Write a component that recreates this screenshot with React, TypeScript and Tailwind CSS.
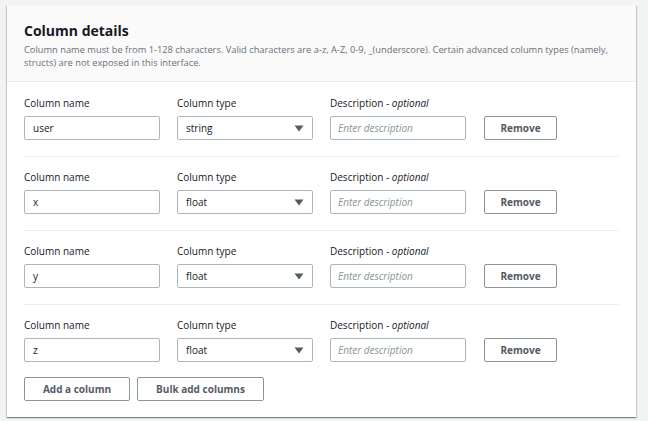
import React from 'react'

const font = { fontFamily: '"Open Sans", "Noto Sans", Arial, sans-serif' }

const rows = [
  { name: 'user', type: 'string' },
  { name: 'x', type: 'float' },
  { name: 'y', type: 'float' },
  { name: 'z', type: 'float' },
]

function Label({ children }: { children: React.ReactNode }) {
  return <div className="text-[10px] leading-[14px] text-[#16191f] mb-[6px]">{children}</div>
}

function Row({ name, type, last }: { name: string; type: string; last: boolean }) {
  return (
    <div className={last ? 'pt-[13px]' : 'pt-[13px] pb-[16px] border-b border-[#eaeded]'}>
      <div className="flex items-end">
        <div className="w-[136px]">
          <Label>Column name</Label>
          <div className="h-[24px] border border-[#aab7b8] rounded-[2px] px-[8px] flex items-center text-[10px] text-[#16191f]">
            {name}
          </div>
        </div>
        <div className="w-[136px] ml-[17px]">
          <Label>Column type</Label>
          <div className="h-[24px] border border-[#aab7b8] rounded-[2px] pl-[8px] pr-[8px] flex items-center justify-between text-[10px] text-[#16191f]">
            <span>{type}</span>
            <svg width="10" height="7" viewBox="0 0 10 7">
              <path d="M0.5 0.5 L9.5 0.5 L5 6.5 Z" fill="#545b64" />
            </svg>
          </div>
        </div>
        <div className="w-[136px] ml-[17px]">
          <Label>
            Description - <i>optional</i>
          </Label>
          <div className="h-[24px] border border-[#aab7b8] rounded-[2px] px-[7px] flex items-center text-[10px] italic text-[#879596]">
            Enter description
          </div>
        </div>
        <button className="ml-[18px] w-[73px] h-[24px] border border-[#879596] rounded-[2px] text-[10px] font-bold text-[#545b64] bg-white">
          Remove
        </button>
      </div>
    </div>
  )
}

export default function App() {
  return (
    <div className="w-[648px] h-[421px] bg-[#f2f3f3] pt-[5px] pl-[7px]" style={font}>
      <div className="w-[629px] bg-white shadow-[0_1px_1px_0_rgba(0,28,36,0.3),1px_1px_1px_0_rgba(0,28,36,0.15),-1px_1px_1px_0_rgba(0,28,36,0.15)]">
        {/* header */}
        <div className="h-[77px] bg-[#fafafa] border-b border-[#eaeded] px-[17px] pt-[16px]">
          <h2 className="text-[14px] leading-[20px] font-bold text-[#16191f]">Column details</h2>
          <p className="text-[9.3px] leading-[13px] text-[#687078] mt-[2px]">
            Column name must be from 1-128 characters. Valid characters are a-z, A-Z, 0-9, _(underscore). Certain advanced column types (namely, structs) are not exposed in this interface.
          </p>
        </div>

        {/* rows */}
        <div className="px-[17px] pt-[1px] pb-[16px]">
          {rows.map((r, i) => (
            <Row key={i} name={r.name} type={r.type} last={i === rows.length - 1} />
          ))}
          <div className="flex gap-[7px] mt-[15px]">
            <button className="w-[106px] h-[24px] border border-[#879596] rounded-[2px] text-[10px] font-bold text-[#545b64] bg-white">
              Add a column
            </button>
            <button className="w-[127px] h-[24px] border border-[#879596] rounded-[2px] text-[10px] font-bold text-[#545b64] bg-white">
              Bulk add columns
            </button>
          </div>
        </div>
      </div>
    </div>
  )
}
